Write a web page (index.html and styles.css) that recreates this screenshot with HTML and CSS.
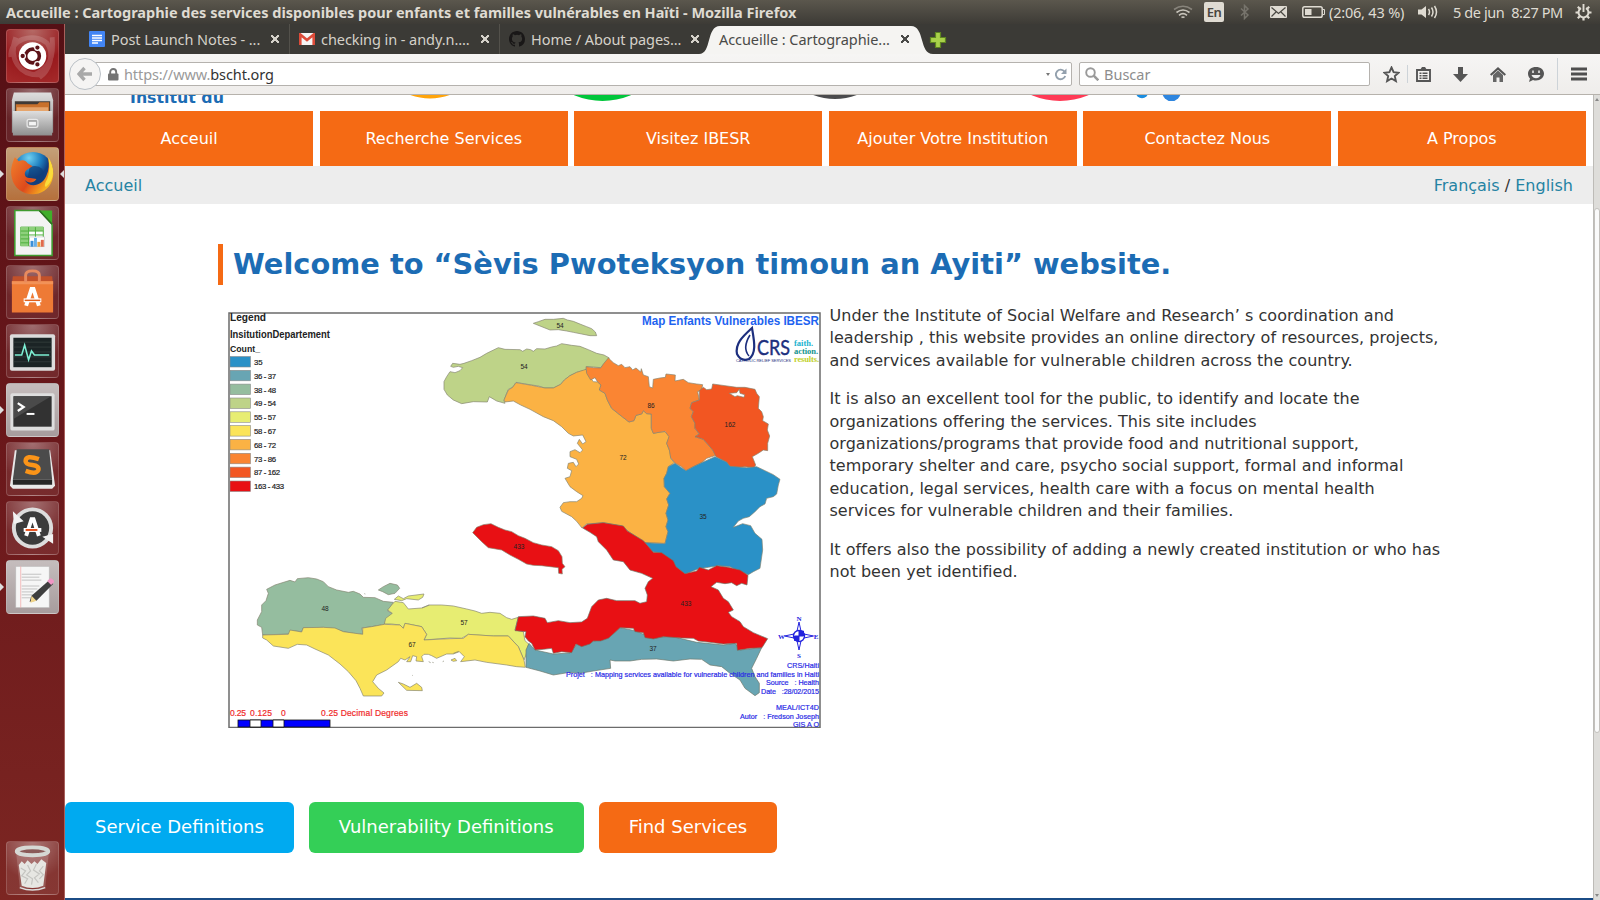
FILE: index.html
```
<!DOCTYPE html>
<html lang="fr">
<head>
<meta charset="utf-8">
<title>Accueille : Cartographie des services</title>
<link rel="stylesheet" href="styles.css">
</head>
<body>
<header class="panel">
  <div class="panel-title">Accueille : Cartographie des services disponibles pour enfants et familles vulnérables en Haïti - Mozilla Firefox</div>
  <svg class="ind wifi" width="20" height="16" viewBox="0 0 20 16" fill="none" stroke="#dfdbd2" stroke-width="1.6"><path d="M1 5.5Q10-1 19 5.5" opacity=".45"/><path d="M3.5 8.500Q10 3.500 16.500 8.500"/><path d="M6 11.300Q10 8 14 11.300"/><path d="M8.500 13.500Q10 12.500 11.500 13.500"/></svg>
  <span class="lang">En</span>
  <svg class="ind bt" width="10" height="16" viewBox="0 0 10 16" fill="none" stroke="#77746c" stroke-width="1.5"><path d="M1 4.500l7 6.500-3.500 3.500V1.500L8 5l-7 6.500"/></svg>
  <svg class="ind mail" width="17" height="12" viewBox="0 0 17 12"><rect width="17" height="12" rx="1" fill="#dfdbd2"/><path d="M1.500 1.500l7 6 7-6M1.500 10.500l4.500-4.500M15.500 10.500L11 6" stroke="#4a4842" fill="none" stroke-width="1.200"/></svg>
  <svg class="ind batt" width="23" height="12" viewBox="0 0 23 12"><rect x=".8" y=".8" width="19.400" height="10.400" rx="1.800" fill="none" stroke="#dfdbd2" stroke-width="1.500"/><rect x="3" y="3" width="6.500" height="6" fill="#dfdbd2"/><path d="M21 3.500h1.500v5H21" fill="none" stroke="#dfdbd2"/></svg>
  <span class="ptext time">(2:06, 43 %)</span>
  <svg class="ind vol" width="20" height="16" viewBox="0 0 20 16" fill="none" stroke="#dfdbd2" stroke-width="1.500"><path d="M0 5.500h3.500L8 2v12l-4.500-3.500H0z" fill="#dfdbd2" stroke="none"/><path d="M10.500 5q2 3 0 6M13.500 3.500q3 4.500 0 9M16.500 2q4 6 0 12"/></svg>
  <span class="ptext date">5 de jun&nbsp; 8:27 PM</span>
  <svg class="ind gear" width="17" height="17" viewBox="0 0 17 17" fill="none" stroke="#dfdbd2"><path d="M6 4.100a5 5 0 1 0 5 0" stroke-width="2"/><path d="M8.500 0v8" stroke-width="1.900"/><path d="M.5 8.500h3M13.500 8.500h3M8.500 13.500v3M2.800 2.800l2 2M14.200 2.800l-2 2M2.800 14.200l2-2M14.200 14.200l-2-2" stroke-width="2.200"/></svg>
</header>
<div class="desktop">
  <nav class="launcher">
    <div class="tile red"><svg viewBox="0 0 54 54"><g fill="none" stroke="#fff" opacity=".16" stroke-width="5"><path d="M5 28C3 10 28 2 42 14C50 26 44 42 34 49"/><path d="M10 8C2 30 14 48 36 46M47 8c2 20-2 30-18 38"/></g><circle cx="27" cy="27" r="14" fill="#fff"/><circle cx="27" cy="27" r="7" fill="none" stroke="#5c1218" stroke-width="3.600"/><g fill="#5c1218" stroke="#fff" stroke-width="1.200"><circle cx="17" cy="27" r="2.800"/><circle cx="32" cy="18.400" r="2.800"/><circle cx="32" cy="35.600" r="2.800"/></g></svg></div>
    <div class="tile"><svg viewBox="0 0 54 54"><defs><linearGradient id="metal" x2="0" y2="1"><stop stop-color="#dedede"/><stop offset="1" stop-color="#8e8e8e"/></linearGradient></defs><path d="M8 4h38l2 8v33H6V12z" fill="url(#metal)"/><path d="M9 13h36v11H9z" fill="#403a36"/><path d="M10 16h22l2-2h10v9H10z" fill="#c9712c"/><path d="M11 19h32v4H11z" fill="#e6a56c"/><path d="M7 23h40v25H7z" fill="url(#metal)"/><rect x="21.500" y="31.500" width="11" height="8" rx="2" fill="#aaa" stroke="#e8e8e8" stroke-width="1.300"/><rect x="23.500" y="34" width="7" height="3.500" fill="#f4f4f4"/></svg></div>
    <div class="tile brown run"><svg viewBox="0 0 54 54"><defs><radialGradient id="globe" cx=".4" cy=".15"><stop stop-color="#6fd1f2"/><stop offset=".6" stop-color="#1f7fc0"/><stop offset="1" stop-color="#123f80"/></radialGradient><linearGradient id="fox" x2="1" y2=".6"><stop stop-color="#f0802c"/><stop offset=".6" stop-color="#dd4a1c"/><stop offset="1" stop-color="#f9b820"/></linearGradient></defs><circle cx="27.500" cy="25" r="20.500" fill="url(#globe)"/><path d="M24 20q8-3 13 2q4 8-3 14q-8 2-12-4z" fill="#0f3f7a" opacity=".7"/><path d="M43 11C51 21 50 37 39 44C27 52 9 46 6 31C4 23 6 17 9 10L13 14C17 12 20 13 22 16L27 19L21 23C17 27 20 32 25 31L31 32C27 38 21 35 19 33C24 42 37 39 41 29C44 23 44 17 43 11z" fill="url(#fox)"/><path d="M43 10C50 20 50 33 41 40C39 40 39 37 42 32C45 24 44 17 43 10z" fill="#fbdc3a"/></svg></div>
    <div class="tile"><svg viewBox="0 0 54 54"><path d="M9 4h25l13 14v32H9z" fill="#f3f3f3" stroke="#3f9b2f" stroke-width="1.600"/><path d="M34 4h13v13z" fill="#3fae2a"/><path d="M34 4l13 14" stroke="#2c6e20" stroke-width="1.500"/><path d="M15 21h23v19H15z" fill="#fff" stroke="#4fae3e"/><path d="M15 21h23v4H15zM15 21h8v19h-8z" fill="#8ed07c"/><path d="M15 25h23M15 29h23M15 33h23M15 37h23M23 21v19M30 21v19" stroke="#4fae3e"/><rect x="24" y="31" width="15" height="10" fill="#fff" stroke="#bbb" stroke-width=".6"/><path d="M25 35h3v6h-3z" fill="#3a8fd8"/><path d="M28.500 32h3v9h-3z" fill="#6ab0e6"/><path d="M32 36h3v5h-3z" fill="#e9a03c"/><path d="M35.500 34h3v7h-3z" fill="#e06a4c"/></svg></div>
    <div class="tile"><svg viewBox="0 0 54 54"><path d="M7 11h40l1 8H6z" fill="#c2512a"/><path d="M6 16h42v32H6z" fill="#ee7a35"/><path d="M6 16h42v3H6z" fill="#f29258"/><path d="M20 17V10q0-4.500 7-4.500T34 10v7" fill="none" stroke="#e88a5e" stroke-width="3"/><path d="M20.500 41L26 24h2l5.500 17" fill="none" stroke="#fff" stroke-width="4"/><path d="M18 35.500h18" stroke="#fff" stroke-width="4"/><path d="M19 35.500h16" stroke="#e0601c" stroke-width="1.500"/></svg></div>
    <div class="tile"><svg viewBox="0 0 54 54"><rect x="4" y="10" width="46" height="37" rx="2" fill="#dcdcdc"/><rect x="7.500" y="13.500" width="39" height="30" fill="#1b2425"/><path d="M8 18h38M8 23h38M8 28h38M8 33h38M8 38h38" stroke="#35403f" stroke-width=".8"/><path d="M9 31h7l3-10 4 15 3-9 3 4h15" fill="none" stroke="#7df0d4" stroke-width="1.600"/></svg></div>
    <div class="tile grey run-left"><svg viewBox="0 0 54 54"><rect x="4.500" y="10" width="45" height="38" rx="2" fill="#dedede"/><rect x="7.500" y="13" width="39" height="31" fill="#323232"/><path d="M8 13h38L8 36z" fill="#4a4a4a"/><path d="M12 20l6 4-6 4" fill="none" stroke="#fff" stroke-width="2.300"/><path d="M21 31h8" stroke="#fff" stroke-width="2"/></svg></div>
    <div class="tile"><svg viewBox="0 0 54 54"><path d="M9 8h36l5 36-3 3H7l-3-3z" fill="#e8e8e8"/><path d="M11 7h33l3 31H7z" fill="#4b4b4b"/><path d="M7 38h40v5H7z" fill="#262626"/><path d="M33.500 17Q20 12 20 19Q20 22 27 23T33 28Q31 33 20 29" fill="none" stroke="#fb9418" stroke-width="4.600"/></svg></div>
    <div class="tile"><svg viewBox="0 0 54 54"><circle cx="27" cy="27" r="21" fill="#ddd"/><circle cx="27" cy="27" r="17" fill="#3c3c3c"/><path d="M7 10l11 10-10 3zM48 43L37 36l11-3z" fill="#f2f2f2"/><path d="M20.500 35L26 18h2l5.500 17" fill="none" stroke="#fff" stroke-width="4"/><path d="M18 29h18" stroke="#fff" stroke-width="4"/><path d="M20 29h12" stroke="#e8501c" stroke-width="2"/></svg></div>
    <div class="tile grey run-left"><svg viewBox="0 0 54 54"><rect x="10" y="6" width="34" height="42" fill="#f6f6f6" stroke="#bbb" stroke-width=".6"/><path d="M15 6v42" stroke="#f0a0a0" stroke-width=".7"/><path d="M16 14h20M16 17h18M16 20h20M16 26h18M16 29h16M16 32h12M16 35h14M16 38h10" stroke="#b5b5b5" stroke-width=".8"/><path d="M44 20l4 4-17 17-7 1 2-6z" fill="#3e3e3e"/><path d="M26 36l5 5-6 2z" fill="#f0d48a"/><path d="M42 21l3-3q4 1 4 4l-3 3z" fill="#f096c4"/></svg></div>
    <div class="tile trash"><svg viewBox="0 0 54 54"><path d="M10 8h34l-4 39H14z" fill="#fff" opacity=".16"/><path d="M13 24l3-4 3 3 3-4 4 4 3-3 3 3 4-5 5 4-3 23q-11 5-22 0z" fill="#e6e6e2"/><path d="M15 27l5 3-4 5 6 3-3 5M22 24l3 6-4 4 6 4-1 6M31 23l-3 6 6 4-5 4 4 5M38 25l-4 5 4 4-4 4" stroke="#c4c4c0" stroke-width="1.200" fill="none"/><ellipse cx="27" cy="10" rx="16" ry="4" fill="#8b5a58" stroke="#d6d8d4" stroke-width="4"/><path d="M14 47q13 5 26 0" stroke="#ddd" stroke-width="1.500" fill="none"/></svg></div>
  </nav>
  <div class="window">
    <div class="tabs">
      <div class="tab t1"><svg width="16" height="16" viewBox="0 0 16 16"><rect width="16" height="16" rx="1" fill="#4285f4"/><path d="M3 4.500h10M3 7h10M3 9.500h10M3 12h6" stroke="#fff" stroke-width="1.300"/></svg><span>Post Launch Notes - ...</span><i class="x"></i></div>
      <div class="tab t2"><svg width="16" height="12" viewBox="0 0 16 12"><rect width="16" height="12" rx="1" fill="#f5f5f5"/><path d="M1.300 12V1.500L8 7l6.700-5.500V12" fill="none" stroke="#dd4b39" stroke-width="2.600"/></svg><span>checking in - andy.n....</span><i class="x"></i></div>
      <div class="tab t3"><svg width="16" height="16" viewBox="0 0 16 16"><path fill="#191717" d="M8 0C3.580 0 0 3.580 0 8c0 3.540 2.290 6.530 5.470 7.590.4.070.55-.17.55-.38 0-.19-.01-.82-.01-1.490-2.010.37-2.530-.49-2.690-.94-.09-.23-.48-.94-.82-1.130-.28-.15-.68-.52-.01-.53.63-.01 1.080.58 1.230.82.720 1.210 1.870.87 2.330.66.070-.52.28-.87.510-1.070-1.780-.2-3.640-.89-3.640-3.950 0-.87.310-1.590.82-2.150-.08-.2-.36-1.020.08-2.120 0 0 .67-.21 2.200.82a7.600 7.600 0 0 1 4 0c1.530-1.040 2.200-.82 2.200-.82.44 1.100.16 1.920.08 2.120.51.56.82 1.270.82 2.150 0 3.070-1.870 3.750-3.650 3.950.29.25.54.73.54 1.480 0 1.070-.01 1.930-.01 2.200 0 .21.15.46.55.38A8 8 0 0 0 16 8c0-4.420-3.580-8-8-8z"/></svg><span>Home / About pages...</span><i class="x"></i></div>
      <div class="tab active"><svg class="tab-shape" width="234" height="28" viewBox="0 0 234 28"><path d="M0 28C13 28 7 0 21 0H212C226 0 220 28 234 28z" fill="#f5f4f2"/></svg><span>Accueille : Cartographie...</span><i class="x"></i></div>
      <svg class="plus" width="18" height="18" viewBox="0 0 18 18"><path d="M6.500 1.500h5v5h5v5h-5v5h-5v-5h-5v-5h5z" fill="#a9d04a" stroke="#5e8420" stroke-width="1.200"/></svg>
    </div>
    <div class="toolbar">
      <div class="back"><svg width="16" height="16" viewBox="0 0 16 16"><path d="M7.500 2L2 8l5.500 6M2.500 8H15" fill="none" stroke="#a9a9a9" stroke-width="3.400"/></svg></div>
      <div class="url"><svg width="11" height="13" viewBox="0 0 11 13"><rect y="5.500" width="10.500" height="7" rx="1" fill="#747474"/><path d="M2.200 6V4a3 3 0 0 1 6 0v2" fill="none" stroke="#747474" stroke-width="1.900"/></svg><span class="addr">https://www.<b>bscht.org</b></span><i class="caret"></i><svg class="reload" width="13" height="13" viewBox="0 0 13 13"><path d="M10.500 3.600A4.800 4.800 0 1 0 11.200 8" fill="none" stroke="#93a0ad" stroke-width="1.900"/><path d="M12.500.5v5.500H7z" fill="#93a0ad"/></svg></div>
      <div class="search"><svg width="14" height="14" viewBox="0 0 14 14" fill="none" stroke="#9a9a9a"><circle cx="5.500" cy="5.500" r="4.300" stroke-width="1.900"/><path d="M8.700 8.700l4.600 4.600" stroke-width="2.500"/></svg><span>Buscar</span></div>
      <svg class="tb star" width="17" height="17" viewBox="0 0 17 17"><path d="M8.500 1.500l2.100 4.700 5 .5-3.800 3.400 1.100 5-4.400-2.600-4.400 2.600 1.100-5L1.400 6.700l5-.5z" fill="none" stroke="#555" stroke-width="1.900"/></svg>
      <i class="div"></i>
      <svg class="tb clip" width="15" height="16" viewBox="0 0 15 16"><path d="M1 4h13v11H1z" fill="none" stroke="#555" stroke-width="1.900"/><path d="M4 4l2-3h3l2 3z" fill="#555"/><path d="M3.500 7.300h2M6.500 7.300h5M3.500 9.800h2M6.500 9.800h5M3.500 12.300h2M6.500 12.300h5" stroke="#555" stroke-width="1.400"/></svg>
      <svg class="tb down" width="15" height="15" viewBox="0 0 15 15"><path d="M5 0h5v7h5l-7.500 8L0 7h5z" fill="#555"/></svg>
      <svg class="tb home" width="16" height="15" viewBox="0 0 16 15"><path d="M.7 8L8 1.500 15.300 8" fill="none" stroke="#555" stroke-width="2.100"/><path d="M3 8l5-4.500L13 8v7H9.500v-4.500h-3V15H3z" fill="#666"/></svg>
      <svg class="tb chat" width="16" height="15" viewBox="0 0 16 15"><path d="M8 0c4.500 0 8 2.700 8 6.500S12.500 13.500 8 13.500c-1 0-2-.1-3-.5L1 15l1-3.500C.7 10.200 0 8.500 0 6.500 0 2.700 3.500 0 8 0z" fill="#555"/><path d="M5 3.500v2.500M11 3.500v2.500" stroke="#eee" stroke-width="1.500"/><path d="M3.500 8h9q-1.500 3.300-4.500 3.300T3.500 8z" fill="#eee"/></svg>
      <i class="div tall"></i>
      <svg class="tb menu" width="16" height="14" viewBox="0 0 16 14"><path d="M0 2h16M0 7h16M0 12h16" stroke="#4f4f4f" stroke-width="3"/></svg>
    </div>
    <div class="viewport">
      <main class="page">
        <div class="banner">
          <svg width="1528" height="16" viewBox="65 96.500 1528 16"><circle cx="430" cy="43" r="57" fill="#ffa40a"/><circle cx="602.500" cy="30.500" r="72" fill="#00c63b"/><circle cx="835" cy="39.500" r="61" fill="#4b4b4d"/><circle cx="1060" cy="30.500" r="72" fill="#ff3a55"/><circle cx="1142" cy="93.500" r="6.200" fill="#1a8de0"/><circle cx="1171.500" cy="93.300" r="9.300" fill="#2f86df"/></svg>
          <strong class="brand">Institut du</strong>
        </div>
        <div class="nav"><a>Acceuil</a><a>Recherche Services</a><a>Visitez IBESR</a><a>Ajouter Votre Institution</a><a>Contactez Nous</a><a>A Propos</a></div>
        <div class="crumbs"><a>Accueil</a><div><a>Français</a> / <a>English</a></div></div>
        <h1>Welcome to “Sèvis Pwoteksyon timoun an Ayiti” website.</h1>
        <div class="intro">
          <svg class="map" width="593" height="416" viewBox="228 312 593 416">
            <rect x="229" y="313" width="591" height="414.500" fill="#fff" stroke="#6b6b6b" stroke-width="1.500"/>
            <g class="legend">
              <text x="230" y="321" font-size="10.500" textLength="36" lengthAdjust="spacingAndGlyphs">Legend</text>
              <text x="230" y="338" font-size="10" textLength="100" lengthAdjust="spacingAndGlyphs">InsitutionDepartement</text>
              <text x="230" y="352" font-size="9.500" textLength="30" lengthAdjust="spacingAndGlyphs">Count_</text>
            </g>
            <g stroke="#8a8a8a" stroke-width=".6">
              <rect x="230" y="356.500" width="20.500" height="10.500" fill="#2a91c7"/><rect x="230" y="370.300" width="20.500" height="10.500" fill="#68a5b3"/><rect x="230" y="384.100" width="20.500" height="10.500" fill="#95bd9f"/><rect x="230" y="398" width="20.500" height="10.500" fill="#bed388"/><rect x="230" y="411.800" width="20.500" height="10.500" fill="#e7ed72"/><rect x="230" y="425.600" width="20.500" height="10.500" fill="#fbe459"/><rect x="230" y="439.400" width="20.500" height="10.500" fill="#fbb244"/><rect x="230" y="453.300" width="20.500" height="10.500" fill="#fa8533"/><rect x="230" y="467.100" width="20.500" height="10.500" fill="#f25622"/><rect x="230" y="481" width="20.500" height="10.500" fill="#e81014"/>
            </g>
            <g class="keys">
              <text x="254" y="364.800">35</text><text x="254" y="378.600" textLength="22">36 - 37</text><text x="254" y="392.500" textLength="22">38 - 48</text><text x="254" y="406.300" textLength="22">49 - 54</text><text x="254" y="420.100" textLength="22">55 - 57</text><text x="254" y="434" textLength="22">58 - 67</text><text x="254" y="447.800" textLength="22">68 - 72</text><text x="254" y="461.600" textLength="22">73 - 86</text><text x="254" y="475.400" textLength="26">87 - 162</text><text x="254" y="489.200" textLength="30">163 - 433</text>
            </g>
            <g transform="translate(430 300) scale(.33333)" stroke="#83836f" stroke-width="2" stroke-linejoin="round">
              <path fill="#bed388" d="M310 70L325 65 345 58 370 58 400 55 412 60 430 64 452 73 470 80 485 86 496 96 500 107 480 107 455 102 430 97 410 93 385 89 360 90 345 84 330 78z"/>
              <path fill="#bed388" d="M42 245L50 230 60 215 75 218 90 212 98 203 85 199 70 202 62 199 68 190 90 193 102 190 125 182 150 172 170 160 205 143 225 148 270 149 278 154 290 147 302 149 310 154 320 146 345 147 365 141 380 138 395 131 425 136 450 139 475 149 500 160 522 165 538 174 530 184 520 195 512 203 490 201 470 200 468 210 440 217 420 227 403 240 392 253 370 264 345 264 325 258 305 255 275 250 258 247 248 262 235 268 228 285 222 302 225 310 200 303 178 290 172 306 130 305 95 311 70 300 52 285 42 268z"/>
              <path fill="#fbb244" d="M222 300L235 270 248 262 258 248 305 256 345 264 370 264 392 253 403 240 420 227 440 217 468 208 475 225 490 245 503 246 513 255 508 270 525 280 532 300 545 325 570 345 597 366 612 362 618 346 635 342 640 332 650 341 664 342 664 385 670 400 690 396 705 395 718 410 710 430 720 455 722 475 733 488 715 500 710 520 702 535 703 560 720 580 710 597 716 615 708 640 714 660 708 680 714 695 705 730 645 728 600 698 575 678 520 668 470 672 456 684 440 664 425 650 395 634 390 622 400 608 420 605 440 605 455 595 459 587 440 575 420 560 405 535 420 530 425 512 412 505 415 490 430 487 438 500 446 492 440 478 420 470 420 455 435 449 450 458 458 450 442 430 448 418 458 432 468 425 458 405 430 408 415 400 395 380 370 362 340 350 300 328 272 315 250 303 225 306z"/>
              <path fill="#fa8533" d="M468 200L490 203 512 204 520 192 535 174 550 188 565 197 575 193 585 203 600 200 608 210 618 204 632 216 634 206 640 225 655 230 658 260 668 264 670 238 690 234 706 232 708 222 736 225 735 243 760 238 775 248 800 252 818 254 815 270 803 275 808 300 785 308 780 325 790 335 784 350 795 370 795 385 808 402 795 410 820 418 835 435 848 450 858 466 830 475 815 488 790 500 768 512 755 500 735 489 722 473 718 450 710 430 717 410 705 394 670 400 664 385 664 342 650 341 640 332 635 342 618 346 612 362 597 366 570 345 545 325 532 300 525 280 508 270 513 255 503 246 495 233 482 240 470 220z"/>
              <path fill="#f25622" d="M808 272L820 262 830 269 845 267 848 252 885 257 920 262 945 262 975 268 980 280 988 290 985 325 995 335 1000 350 998 362 1015 372 1012 390 1019 408 1013 430 1013 452 1000 450 985 460 967 470 977 495 972 503 945 500 930 502 900 500 890 487 858 470 848 450 835 435 820 418 795 410 808 402 795 385 795 370 784 350 790 335 780 325 785 308 808 300z"/>
              <path fill="#fff" d="M898 280L920 278 928 268 930 280 944 284 942 292 922 287 915 290z"/>
              <path fill="#2a91c7" d="M735 490L768 512 790 500 815 488 855 470 890 486 900 499 950 503 980 500 1005 512 1030 524 1050 538 1045 555 1040 582 1030 590 1010 595 1005 612 990 620 975 635 958 650 940 655 925 663 910 682 938 671 962 677 975 700 996 718 998 750 990 805 970 815 955 824 920 810 900 800 865 797 835 802 805 806 765 823 750 810 735 800 730 785 700 765 688 758 668 755 645 728 705 731 714 695 708 680 714 660 708 640 716 615 710 597 720 580 703 560 702 535 710 520 715 500z"/>
              <path fill="#e81014" d="M128 698L140 682 160 674 183 671 205 682 225 690 245 695 265 707 285 715 310 728 335 735 365 740 385 752 396 770 397 790 405 800 396 808 397 822 386 820 385 803 360 800 335 797 310 796 290 792 265 778 240 765 215 750 175 743 155 725z"/>
            </g>
            <g transform="translate(220 510) scale(.33333)" stroke="#83836f" stroke-width="2" stroke-linejoin="round">
              <path fill="#95bd9f" d="M112 345L112 330 125 305 125 285 138 272 145 250 140 238 165 225 210 211 225 216 232 206 265 203 290 207 310 215 325 230 350 240 385 247 400 244 420 252 430 262 465 263 490 274 520 277 512 290 503 303 517 310 500 325 493 343 455 350 425 354 430 373 400 370 370 365 345 356 310 352 250 354 245 365 215 362 205 372 128 375 125 352z"/>
              <path fill="#95bd9f" d="M475 240L490 230 510 220 532 225 539 235 525 250 505 254 488 245z"/>
              <path fill="#e7ed72" d="M493 342L497 325 517 310 503 300 515 285 525 274 550 278 565 297 605 294 630 285 665 285 700 288 740 297 765 303 785 310 810 307 840 310 860 323 875 328 895 322 885 360 910 365 915 392 926 402 918 435 912 450 895 410 865 378 820 378 770 375 745 373 725 385 690 384 612 390 620 373 605 350 555 340 550 355 540 345 515 342z"/>
              <path fill="#e7ed72" d="M523 268L535 258 550 266 565 258 612 252 608 262 595 270 560 266 545 272z"/>
              <path fill="#fbe459" d="M128 375L205 373 210 360 245 366 250 353 310 352 345 354 370 365 428 373 428 354 455 350 493 343 540 345 550 355 555 340 605 350 620 373 612 390 690 386 730 385 745 373 820 378 865 378 895 410 912 450 916 472 890 470 860 465 800 457 765 450 722 455 733 440 718 425 700 432 680 432 650 445 635 437 625 433 612 433 605 440 610 455 588 453 590 440 578 437 572 455 560 455 570 440 555 450 542 445 535 455 500 480 470 495 458 515 475 535 492 549 485 558 430 558 420 535 408 512 385 485 360 462 325 435 285 417 260 405 232 403 205 415 160 408 140 390 128 384z"/>
              <path fill="#fbe459" d="M535 517L550 522 570 532 590 520 605 532 607 542 560 541z"/><path fill="#fbe459" d="M693 450l12-5 5 7-10 2z"/>
              <path fill="none" d="M626 455l6 3M637 457l4 1M668 455l4-2M577 496l2 1M433 251l3 1M606 294l22-10M700 430l16-6"/>
            </g>
            <g transform="translate(510 510) scale(.33333)" stroke="#6d7568" stroke-width="2" stroke-linejoin="round">
              <path fill="#68a5b3" d="M48 420L57 400 75 420 130 432 180 429 200 403 240 397 300 380 330 353 375 362 430 385 480 378 560 397 640 405 675 400 690 420 755 413 740 445 725 475 735 500 748 520 748 548 735 557 705 535 690 510 660 490 635 470 600 465 575 448 540 447 490 453 440 447 395 448 360 453 315 453 300 450 302 475 250 483 210 490 180 487 130 495 90 483 48 472z"/>
              <path fill="#e81014" d="M218 54L232 43 280 38 340 48 352 63 400 92 430 127 455 128 490 152 498 170 525 191 560 183 568 172 595 180 620 167 655 172 690 180 714 196 711 225 695 220 680 227 665 218 645 221 620 217 603 230 625 240 640 265 655 275 670 300 655 307 665 320 690 335 700 350 730 368 773 386 756 413 720 415 682 421 680 400 640 402 600 397 565 393 550 385 515 384 460 380 430 387 405 383 400 368 375 365 370 355 330 353 312 370 295 385 272 393 250 393 240 402 215 410 198 402 185 428 155 425 130 430 125 415 100 418 75 420 65 400 55 393 45 380 48 365 15 362 25 320 70 318 105 325 112 338 145 332 180 338 215 336 232 325 245 290 265 270 290 265 320 272 375 272 390 280 410 275 412 255 405 235 415 215 428 205 395 190 360 180 340 155 310 150 290 120 265 95 260 80 240 67z"/>
            </g>
            <g class="counts"><text x="560" y="328">54</text><text x="524" y="369">54</text><text x="651" y="408">86</text><text x="730" y="427">162</text><text x="623" y="460">72</text><text x="703" y="519">35</text><text x="519" y="549">433</text><text x="325" y="611">48</text><text x="464" y="625">57</text><text x="412" y="647">67</text><text x="686" y="606">433</text><text x="653" y="651">37</text></g>
            <text class="map-title" x="642" y="325" textLength="177" lengthAdjust="spacingAndGlyphs">Map Enfants Vulnerables IBESR</text>
            <g fill="none" stroke="#1d2f7e"><path d="M752 328C742 337 735 344 737 354Q741 362 749 359C757 353 754 340 752 328z" stroke-width="2.200"/><path d="M750 335q-8 13-1 21" stroke-width="1.600"/></g>
            <text x="757" y="355" class="crs" textLength="33" lengthAdjust="spacingAndGlyphs">CRS</text>
            <text x="736" y="361.500" class="tiny" textLength="55">CATHOLIC RELIEF SERVICES</text>
            <g class="motto"><text x="794" y="346" fill="#22b3cf">faith.</text><text x="794" y="354" fill="#13948d" textLength="24">action.</text><text x="794" y="362" fill="#bfd12c" textLength="25">results.</text></g>
            <g stroke="#2222dd" fill="#fff"><path d="M799 622l2.500 11.500 12 2.500-12 2.500-2.500 11.500-2.500-11.500-12-2.500 12-2.500z"/><circle cx="799" cy="636" r="5.500" stroke-width="1.400"/><path d="M799 631h4.500v5h-9v4.500h4.500z" fill="#22d"/></g>
            <g class="compass"><text x="799" y="620.500">N</text><text x="781.500" y="639">W</text><text x="816" y="639">E</text><text x="799" y="658">S</text></g>
            <g class="credits"><text x="819" y="668" textLength="32">CRS/Haiti</text><text x="819" y="676.500" textLength="253" xml:space="preserve">Projet   : Mapping services available for vulnerable children and families in Haiti</text><text x="819" y="685" textLength="53" xml:space="preserve">Source   : Health</text><text x="819" y="693.500" textLength="58" xml:space="preserve">Date   :28/02/2015</text><text x="819" y="710" textLength="43">MEAL/ICT4D</text><text x="819" y="718.500" textLength="79" xml:space="preserve">Autor   : Fredson Joseph</text><text x="819" y="726.500" textLength="26">GIS A O</text></g>
            <g class="scale"><text x="230" y="716" textLength="16">0.25</text><text x="250" y="716" textLength="22">0.125</text><text x="281" y="716">0</text><text x="321" y="716" textLength="87">0.25 Decimal Degrees</text></g>
            <g stroke="#111" stroke-width=".8" fill="#00f"><rect x="238" y="720" width="92" height="7"/><path d="M250 720h11v7h-11zM273 720h11v7h-11z" fill="#fff"/></g>
          </svg>
          <div class="copy">
            <p>Under the Institute of Social Welfare and Research’ s coordination and<br>leadership , this website provides an online directory of resources, projects,<br>and services available for vulnerable children across the country.</p>
            <p>It is also an excellent tool for the public, to identify and locate the<br>organizations offering the services. This site includes<br>organizations/programs that provide food and nutritional support,<br>temporary shelter and care, psycho social support, formal and informal<br>education, legal services, health care with a focus on mental health<br>services for vulnerable children and their families.</p>
            <p>It offers also the possibility of adding a newly created institution or who has<br>not been yet identified.</p>
          </div>
        </div>
        <div class="actions"><a class="btn blue">Service Definitions</a><a class="btn green">Vulnerability Definitions</a><a class="btn orange">Find Services</a></div>
        <div class="footer-edge"></div>
      </main>
      <div class="scrollbar"><i class="arrow up"></i><div class="thumb"></div><i class="arrow dn"></i></div>
    </div>
  </div>
</div>
</body>
</html>
```
FILE: styles.css
```
* { box-sizing: border-box; }
body { margin: 0; width: 1600px; height: 900px; overflow: hidden; display: flex; flex-direction: column; font-family: "DejaVu Sans", sans-serif; font-size: 16px; color: #333; background: #fff; }
svg { display: block; flex: none; }

/* desktop panel */
.panel { height: 24px; flex: none; display: flex; align-items: center; padding-right: 8px; background: linear-gradient(#5b574d, #3d3b36); color: #dfdbd2; font-family: "Noto Sans", sans-serif; font-size: 14.5px; white-space: nowrap; }
.panel-title { width: 1173px; padding-left: 6px; font-weight: 700; font-size: 14.5px; letter-spacing: -.01px; }
.wifi { margin-left: 0; opacity: .85; }
.lang { margin-left: 11px; width: 20px; height: 20px; border-radius: 2px; background: #dfdbd2; color: #4a4740; font-size: 13px; font-weight: 600; line-height: 21px; text-align: center; letter-spacing: -.5px; }
.bt { margin-left: 16px; }
.mail { margin-left: 20px; }
.batt { margin-left: 15px; }
.time { margin-left: 4px; width: 78px; letter-spacing: -.2px; }
.vol { margin-left: 11px; }
.date { margin-left: 15px; width: 112px; letter-spacing: -.4px; }
.gear { margin-left: auto; }

.desktop { flex: 1; display: flex; min-height: 0; }

/* launcher */
.launcher { width: 65px; flex: none; display: flex; flex-direction: column; gap: 5px; padding: 5px 0 5px 6px; background: linear-gradient(#551015, #6b181b 50%, #7c2622); border-right: 1px solid #a8605c; }
.tile { position: relative; width: 53px; height: 54px; border-radius: 4px; border: 1px solid rgba(255,255,255,.16); background: radial-gradient(circle at 50% 0, rgba(255,255,255,.38), rgba(255,255,255,.08) 65%); }
.tile svg { width: 53px; height: 54px; margin: -1px; }
.tile.red { background: radial-gradient(circle at 50% 0, #b56a66, #98191d 60%, #a52a2a); }
.tile.brown { background: linear-gradient(#c4a079, #b5703c); }
.tile.grey { background: linear-gradient(#c5bdbd, #a79c9d); }
.trash { margin-top: auto; }
.run::before, .run-left::before { content: ""; position: absolute; left: -7px; top: 22px; border: 4px solid transparent; border-left-color: #ddd; border-right: 0; }
.run::after { content: ""; position: absolute; right: -6px; top: 22px; border: 4px solid transparent; border-right-color: #ddd; border-left: 0; }

/* browser chrome */
.window { flex: 1; min-width: 0; display: flex; flex-direction: column; }
.tabs { height: 30px; flex: none; display: flex; align-items: stretch; background: #3b3a36; color: #d5d1c9; font-family: "Noto Sans", sans-serif; font-size: 14.5px; white-space: nowrap; }
.tab { display: flex; align-items: center; gap: 6px; letter-spacing: -.07px; }
.tab .x { margin-left: auto; }
.t1 { width: 225px; padding: 0 10px 0 24px; border-right: 1px solid #53514b; }
.t2 { width: 210px; padding: 0 10px 0 9px; border-right: 1px solid #53514b; }
.t3 { width: 201px; padding: 0 2px 0 9px; }
.active { position: relative; width: 228px; padding: 0 20px 0 18px; color: #4a4a48; }
.tab-shape { position: absolute; left: -2px; top: 2px; }
.active span, .active .x { position: relative; }
.x { width: 8px; height: 8px; background: linear-gradient(45deg, transparent 38%, currentColor 38% 62%, transparent 62%), linear-gradient(-45deg, transparent 38%, currentColor 38% 62%, transparent 62%); }
.plus { position: relative; margin: 7px 0 0 0; }
.toolbar { height: 41px; flex: none; display: flex; align-items: center; padding: 0 13px 0 4px; background: linear-gradient(#f6f5f4, #efedeb); border-bottom: 1px solid #b6b2ac; font-family: "Noto Sans", sans-serif; font-size: 14.5px; }
.back { position: relative; z-index: 1; width: 32px; height: 32px; flex: none; border-radius: 50%; border: 1px solid #bac0c6; background: #f5f4f3; display: flex; align-items: center; justify-content: center; }
.url { width: 981px; margin-left: -10px; height: 24px; border: 1px solid #b5b2ae; border-radius: 2px; background: #fff; display: flex; align-items: center; padding: 0 4px 0 16px; }
.addr { margin-left: 5px; color: #9a9a9a; letter-spacing: -.1px; }
.addr b { font-weight: 400; color: #333; }
.caret { margin-left: auto; margin-right: 4px; border: 2.500px solid transparent; border-top: 3px solid #777; border-bottom: 0; }
.search { width: 291px; height: 24px; margin-left: 7px; border: 1px solid #b5b2ae; border-radius: 2px; background: #fff; display: flex; align-items: center; gap: 5px; padding-left: 5px; color: #8d8d8d; }
.star { margin-left: 13px; }
.div { width: 1px; height: 18px; margin-left: 7px; background: #cdd3d8; }
.tall { height: 32px; margin-left: 13px; }
.clip { margin-left: 8px; }
.down { margin-left: 22px; }
.home { margin-left: 22px; }
.chat { margin-left: 22px; }
.menu { margin-left: auto; }

/* web page */
.viewport { flex: 1; display: flex; min-height: 0; }
.page { width: 1528px; display: flex; flex-direction: column; background: #fff; }
.banner { position: relative; height: 16px; flex: none; overflow: hidden; }
.brand { position: absolute; left: 65px; top: -9px; font-size: 15.800px; line-height: 24px; color: #1c6cb4; }
.nav { height: 55px; flex: none; display: grid; grid-template-columns: repeat(6, 1fr); gap: 6.200px; padding-right: 7px; }
.nav a { display: flex; align-items: center; justify-content: center; background: #f56a14; color: #fff; }
.crumbs { height: 38px; flex: none; display: flex; align-items: center; justify-content: space-between; padding: 0 20px; background: #ededed; }
.crumbs a { color: #2583a3; }
h1 { margin: 40px 0 0 153px; height: 41px; padding-left: 10px; border-left: 5px solid #f56a14; color: #1c6cb4; font-size: 28.870px; line-height: 41px; white-space: nowrap; }
.intro { display: flex; gap: 8.500px; margin: 27px 0 0 163px; }
.copy { margin-top: -7px; line-height: 22.400px; letter-spacing: .03px; white-space: nowrap; }
.copy p { margin: 0 0 16px; }
.actions { display: flex; gap: 15px; margin-top: 74px; }
.btn { height: 51px; padding: 0 30px; border-radius: 6px; color: #fff; font-size: 18px; line-height: 49px; white-space: nowrap; }
.blue { background: #00aaf0; }
.green { background: #34cf57; }
.orange { background: #f56a14; }
.footer-edge { height: 2px; margin-top: auto; background: #1b4c86; }
.scrollbar { width: 7px; display: flex; flex-direction: column; align-items: center; justify-content: space-between; background: #deddda; border-left: 1px solid #bdbbb7; padding: 3px 0; }
.thumb { width: 6px; height: 525px; margin-top: -55px; background: #fafafa; border: 1px solid #c2c0bc; border-radius: 3px; }
.arrow { border: 2px solid transparent; }
.up { border-bottom: 3px solid #888; border-top: 0; }
.dn { border-top: 3px solid #888; border-bottom: 0; }

/* department map */
.map { font-family: "Liberation Sans", Arial, sans-serif; }
.legend { font-weight: 700; fill: #222; }
.keys { font-size: 7.800px; fill: #222; stroke: #222; stroke-width: .2px; }
.counts { font-size: 6.500px; fill: #222; text-anchor: middle; }
.map-title { font-size: 12.500px; font-weight: 700; fill: #1e63f0; }
.crs { font-family: Lato, sans-serif; font-size: 21px; fill: #1d2f7e; stroke: #1d2f7e; stroke-width: .4px; }
.tiny { font-size: 4px; fill: #1d2f7e; }
.motto { font-family: "Liberation Serif", serif; font-weight: 700; font-size: 8.500px; }
.compass { font-family: "Liberation Serif", serif; font-weight: 700; font-size: 7px; fill: #22d; text-anchor: middle; }
.credits { font-size: 7.200px; fill: #2a2ae6; stroke: #2a2ae6; stroke-width: .2px; text-anchor: end; }
.scale { font-size: 8.500px; fill: #f02a2a; stroke: #f02a2a; stroke-width: .2px; }
```
